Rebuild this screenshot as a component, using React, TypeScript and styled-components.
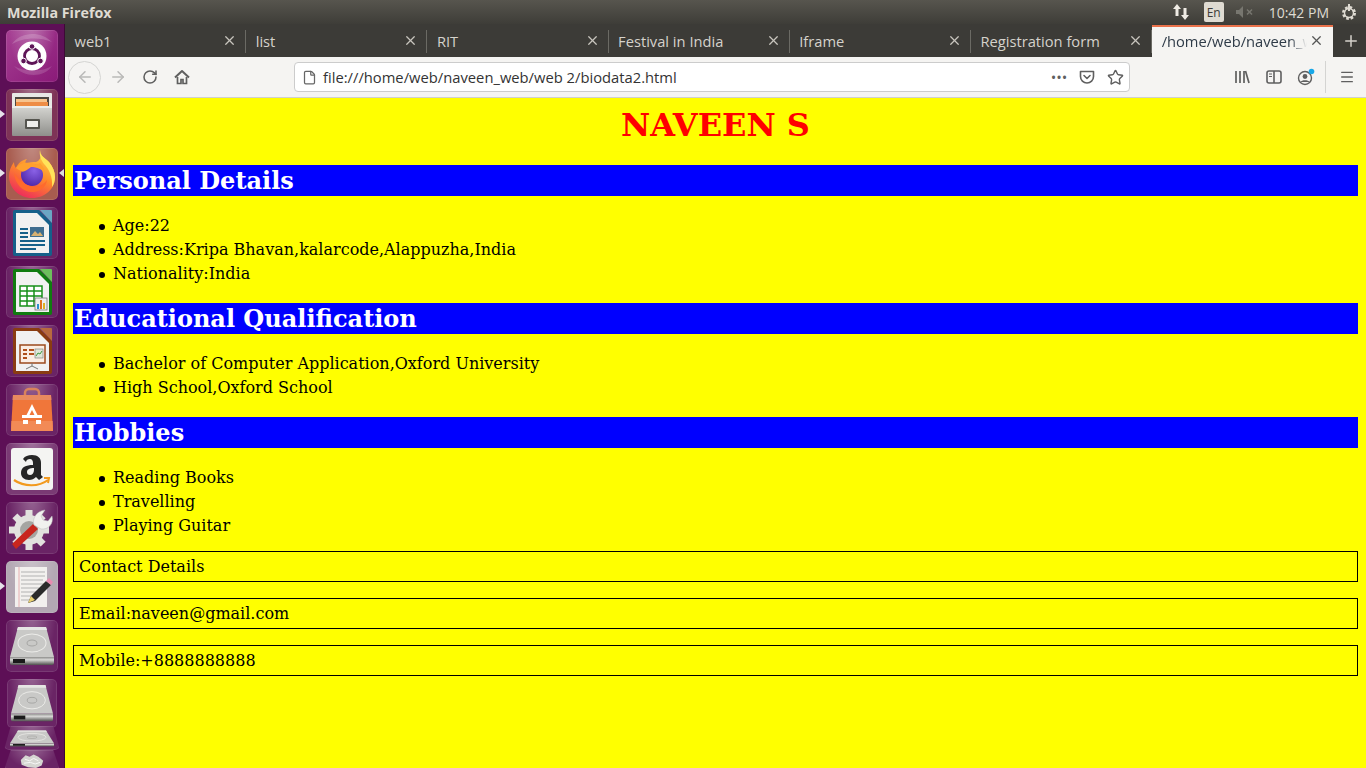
import React from 'react';
import styled, { createGlobalStyle } from 'styled-components';
import { X, Plus, ArrowLeft, ArrowRight, RotateCw, File, Star, Menu } from 'lucide-react';

const Global = createGlobalStyle`
  html, body { margin: 0; padding: 0; height: 100%; overflow: hidden; }
  body { font-family: "Open Sans", "Noto Sans", sans-serif; }
`;

const Screen = styled.div`
  width: 1366px;
  height: 768px;
  display: flex;
  flex-direction: column;
  overflow: hidden;
`;

const TopBar = styled.div`
  height: 24px;
  flex: none;
  display: flex;
  align-items: center;
  justify-content: space-between;
  padding: 0 8px 0 7px;
  background: linear-gradient(#57554e, #3e3d38);
  color: #dfdbd2;
`;

const WindowTitle = styled.span`
  font-weight: 700;
  font-family: "Open Sans", sans-serif;
  font-size: 14.3px;
`;

const Tray = styled.div`
  display: flex;
  align-items: center;
`;

const LangBadge = styled.span`
  width: 20px;
  height: 20px;
  margin: 0 12px 0 14px;
  background: #dfdbd2;
  color: #3c3b37;
  border-radius: 2px;
  font-size: 12px;
  display: flex;
  align-items: center;
  justify-content: center;
`;

const Clock = styled.span`
  margin: 0 11px 0 15px;
  font-size: 14px;
`;

const Body = styled.div`
  flex: 1;
  display: flex;
  min-height: 0;
`;

const Launcher = styled.nav`
  width: 64px;
  flex: none;
  border-right: 1px solid #3d0a36;
  background: #5d0f56;
  display: flex;
  flex-direction: column;
  align-items: center;
  gap: 7px;
  padding-top: 6px;
  overflow: hidden;
`;

const Tile = styled.div<{ $bg?: string; $running?: boolean; $focused?: boolean }>`
  width: 52px;
  height: 52px;
  flex: none;
  border-radius: 5px;
  background: radial-gradient(ellipse at 50% -10%, rgba(255, 255, 255, 0.3), transparent 65%), ${p => p.$bg || '#6a2465'};
  box-shadow: inset 0 0 0 1px rgba(255, 255, 255, 0.1);
  display: flex;
  align-items: center;
  justify-content: center;
  position: relative;
  &::before {
    content: ${p => (p.$running ? '""' : 'none')};
    position: absolute;
    left: -6px;
    top: 21px;
    border: 4px solid transparent;
    border-left: 5px solid #e6e2ea;
    border-right: 0;
  }
  &::after {
    content: ${p => (p.$focused ? '""' : 'none')};
    position: absolute;
    right: -6px;
    top: 21px;
    border: 4px solid transparent;
    border-right: 5px solid #dcdcdc;
    border-left: 0;
  }
`;

const ShrunkTile = styled(Tile)`
  width: 50px;
  height: 49px;
  margin-bottom: -9px;
`;

const FoldedTile = styled(Tile)<{ $h: number }>`
  width: 56px;
  height: ${p => p.$h}px;
  overflow: hidden;
  clip-path: polygon(12% 0, 88% 0, 100% 100%, 0 100%);
  margin-bottom: -7px;
`;

const Window = styled.div`
  flex: 1;
  min-width: 0;
  display: flex;
  flex-direction: column;
`;

const TabStrip = styled.div`
  height: 33px;
  flex: none;
  box-sizing: border-box;
  padding-top: 1px;
  display: flex;
  background: #3c3b37;
`;

const Tab = styled.div<{ $active?: boolean }>`
  width: 181.2px;
  flex: none;
  box-sizing: border-box;
  display: flex;
  align-items: center;
  justify-content: space-between;
  padding: 0 9px 3px 9.5px;
  font-size: 14.7px;
  color: ${p => (p.$active ? '#2f3b48' : '#d5d2cb')};
  background: ${p => (p.$active ? '#f5f4f2' : 'transparent')};
  border-top: 2px solid ${p => (p.$active ? '#e9714a' : 'transparent')};
  position: relative;
  &::after {
    content: ${p => (p.$active ? 'none' : '""')};
    position: absolute;
    right: 0;
    top: 3px;
    bottom: 4px;
    width: 1px;
    background: #6b6a64;
  }
`;

const TabLabel = styled.span`
  white-space: nowrap;
  overflow: hidden;
  width: 145px;
  mask-image: linear-gradient(to right, #000 88%, transparent);
`;

const NewTab = styled.div`
  flex: 1;
  color: #d5d2cb;
  display: flex;
  align-items: center;
  justify-content: center;
  padding-left: 2px;
`;

const Toolbar = styled.div`
  height: 41px;
  flex: none;
  box-sizing: border-box;
  display: flex;
  align-items: center;
  background: #f5f4f2;
  border-bottom: 1px solid #cfcfcf;
  color: #5f5f5f;
`;

const BackButton = styled.div`
  width: 33px;
  height: 33px;
  margin-left: 3px;
  box-sizing: border-box;
  border: 1px solid #d4d4d2;
  border-radius: 50%;
  display: flex;
  align-items: center;
  justify-content: center;
  color: #b9b9b8;
`;

const NavIcon = styled.div<{ $w: number; $color?: string }>`
  width: ${p => p.$w}px;
  flex: none;
  display: flex;
  justify-content: center;
  color: ${p => p.$color || '#5f5f5f'};
`;

const UrlBar = styled.div`
  width: 836px;
  height: 30px;
  margin-left: 96px;
  box-sizing: border-box;
  flex: none;
  display: flex;
  align-items: center;
  padding: 0 2px 0 7px;
  background: #fff;
  border: 1px solid #cccccc;
  border-radius: 4px;
  font-size: 14.75px;
  color: #333;
`;

const UrlText = styled.span`
  flex: 1;
  margin-left: 6px;
`;

const ToolRight = styled.div`
  flex: 1;
  display: flex;
  align-items: center;
  padding-left: 96px;
`;

const Divider = styled.div`
  width: 1px;
  height: 32px;
  background: #d4d4d2;
  margin: 0 11px 0 3px;
`;

const Page = styled.main`
  flex: 1;
  background: #ffff00;
  padding: 8px;
  font-family: "DejaVu Serif", serif;
  color: #000;
  font-size: 16px;
`;

const Name = styled.h1`
  margin: 0 0 22px;
  height: 36px;
  padding-top: 1px;
  line-height: 37px;
  text-align: center;
  color: #ff0000;
  font-size: 32px;
  font-weight: 700;
`;

const SectionHead = styled.h2`
  margin: 0;
  height: 31px;
  line-height: 31px;
  padding-left: 1px;
  background: #0000ff;
  color: #fff;
  font-size: 24px;
  font-weight: 700;
`;

const List = styled.ul`
  margin: 17.6px 0;
  padding: 0 0 0 40px;
  line-height: 24px;
  list-style: none;
`;

const Item = styled.li`
  position: relative;
  &::before {
    content: "";
    position: absolute;
    left: -14px;
    top: 10px;
    width: 6px;
    height: 6px;
    border-radius: 50%;
    background: #000;
  }
`;

const ContactBox = styled.div`
  height: 31px;
  box-sizing: border-box;
  line-height: 29px;
  border: 1px solid #000;
  padding: 0 5px;
  margin-bottom: 16px;
`;

const Contacts = styled.div`
  margin-top: -4.6px;
`;

// launcher artwork
const UbuntuIcon = () => (
  <svg width="52" height="52" viewBox="0 0 52 52">
    <path d="M6 14C14 2 34 0 46 12 32 6 16 8 6 14z" fill="#fff" opacity="0.18" />
    <path d="M8 36c10 12 30 12 38 0-10 6-28 6-38 0z" fill="#fff" opacity="0.15" />
    <circle cx="26" cy="26" r="14.5" fill="#fff" />
    <circle cx="26" cy="26" r="7.5" fill="none" stroke="#5e1557" strokeWidth="2.8" />
    <circle cx="26" cy="16.5" r="2.8" fill="#5e1557" stroke="#fff" strokeWidth="1" />
    <circle cx="17.5" cy="31" r="2.8" fill="#5e1557" stroke="#fff" strokeWidth="1" />
    <circle cx="34.5" cy="31" r="2.8" fill="#5e1557" stroke="#fff" strokeWidth="1" />
  </svg>
);

const FilesIcon = () => (
  <svg width="42" height="44" viewBox="0 0 42 44">
    <defs>
      <linearGradient id="cab" x1="0" y1="0" x2="0" y2="1">
        <stop offset="0" stopColor="#d6d6d2" />
        <stop offset="1" stopColor="#8f8f8b" />
      </linearGradient>
    </defs>
    <rect x="1" y="0" width="40" height="14" rx="1" fill="#e8e8e5" />
    <rect x="4" y="4" width="34" height="12" fill="#4c4640" />
    <rect x="5" y="6" width="31" height="3" fill="#f7c38d" />
    <rect x="5" y="9" width="32" height="5" fill="#ee8d45" />
    <rect x="1" y="13" width="40" height="30" rx="1" fill="url(#cab)" />
    <rect x="1" y="13" width="40" height="2" fill="#ecece9" />
    <rect x="14" y="26" width="15" height="10" rx="1" fill="#55554f" />
    <rect x="16" y="28" width="11" height="6" fill="#f0f0ed" />
  </svg>
);

const FirefoxIcon = () => (
  <svg width="46" height="50" viewBox="0 0 46 50">
    <defs>
      <linearGradient id="ffo" x1="0.8" y1="0" x2="0.3" y2="1">
        <stop offset="0" stopColor="#ffd84a" />
        <stop offset="0.5" stopColor="#ff8a2a" />
        <stop offset="1" stopColor="#ee2a5c" />
      </linearGradient>
      <radialGradient id="ffg" cx="0.6" cy="0.3" r="0.8">
        <stop offset="0" stopColor="#8a62e6" />
        <stop offset="1" stopColor="#4a22a4" />
      </radialGradient>
    </defs>
    <path d="M31 1C31 7 36 9 40 13C44 18 46 23 46 28C46 40 36 49 23 49C10 49 0 39 0 27C0 22 2 17 5 13C5 16 6 18 7 19C9 14 13 11 18 10C16 12 16 14 17 15C20 13 24 13 27 13C30 12 32 9 32 6C32 4 31 2 31 1Z" fill="url(#ffo)" />
    <path d="M31 1C31 7 36 9 40 13C44 18 46 23 46 28C46 32 45 35 43 38C44 28 40 20 35 15C32 11 30 6 31 1Z" fill="#ffe45a" />
    <circle cx="23" cy="26" r="11" fill="url(#ffg)" />
    <path d="M7 19C10 14 16 13 21 14C25 15 28 16 31 14C34 17 36 21 36 25C33 20 28 18 22 18C18 21 14 24 12 22C10 21 8 20 7 19Z" fill="#ffa02e" />
    <path d="M5 24C6 35 14 44 25 43C32 42 37 38 38 31C34 37 27 39 21 37C14 35 10 30 5 24Z" fill="#ff6a2c" />
  </svg>
);

const LibreDoc = ({ edge, corner, children }: { edge: string; corner: string; children: React.ReactNode }) => (
  <svg width="42" height="48" viewBox="0 0 42 48">
    <path d="M2 3a2 2 0 0 1 2-2h24l13 13v31a2 2 0 0 1-2 2H4a2 2 0 0 1-2-2z" fill={edge} />
    <path d="M29 1l12 13V2a1 1 0 0 0-1-1z" fill={corner} />
    <path d="M5 4h21l12 12v28H5z" fill="#f1f1f1" />
    {children}
  </svg>
);

const WriterIcon = () => (
  <LibreDoc edge="#15608a" corner="#6aa6c4">
    <rect x="9" y="19" width="8" height="2" fill="#15608a" />
    <rect x="9" y="23" width="8" height="2" fill="#15608a" />
    <rect x="9" y="27" width="8" height="2" fill="#15608a" />
    <rect x="19" y="18" width="14" height="10" fill="#3f6d8f" />
    <path d="M20 27l4-5 3 3 2-2 3 4z" fill="#d8b070" />
    <rect x="9" y="31" width="25" height="2" fill="#15608a" />
    <rect x="9" y="35" width="25" height="2" fill="#15608a" />
    <rect x="9" y="39" width="16" height="2" fill="#15608a" />
  </LibreDoc>
);

const CalcIcon = () => (
  <LibreDoc edge="#107c10" corner="#6cbf5c">
    <rect x="9" y="18" width="22" height="20" fill="#fff" stroke="#17901a" strokeWidth="1.5" />
    <path d="M9 23h22M9 28h22M9 33h22M16 18v20M23 18v20" stroke="#17901a" strokeWidth="1.5" />
    <rect x="24" y="30" width="12" height="12" fill="#eee" stroke="#777" strokeWidth="0.8" />
    <rect x="26" y="36" width="2" height="5" fill="#2d8fd0" />
    <rect x="29" y="32" width="2" height="9" fill="#e07020" />
    <rect x="32" y="35" width="2" height="6" fill="#e0b020" />
  </LibreDoc>
);

const ImpressIcon = () => (
  <LibreDoc edge="#8a3c12" corner="#b86a3e">
    <rect x="9" y="18" width="25" height="18" fill="#fbeee4" stroke="#9c4a1c" strokeWidth="1.5" />
    <rect x="12" y="22" width="4" height="2" fill="#b0501c" />
    <rect x="12" y="26" width="4" height="2" fill="#b0501c" />
    <rect x="12" y="30" width="4" height="2" fill="#b0501c" />
    <rect x="18" y="22" width="5" height="2" fill="#b0501c" />
    <rect x="18" y="26" width="5" height="2" fill="#b0501c" />
    <rect x="24" y="22" width="8" height="9" fill="#dfe6d8" stroke="#777" strokeWidth="0.6" />
    <path d="M25 29l2-3 2 1 2-3" stroke="#3f9a3f" fill="none" />
    <path d="M21 36v3M21 39l-6 3M21 39l6 3" stroke="#777" />
  </LibreDoc>
);

const StoreIcon = () => (
  <svg width="44" height="46" viewBox="0 0 44 46">
    <path d="M15 12V6a4 4 0 0 1 4-4h6a4 4 0 0 1 4 4v6" fill="none" stroke="#d9835c" strokeWidth="2.5" />
    <path d="M3 8h38l2 36H1z" fill="#f0763a" />
    <path d="M3 8h38l0.4 5H2.6z" fill="#e88a5f" />
    <path d="M1.4 34h41.2l0.4 10H1z" fill="#f28a56" />
    <path d="M22 17l-6 12h3l3-6 3 6h3z" fill="#fff" />
    <rect x="12" y="28" width="20" height="3" fill="#fff" />
    <rect x="13" y="33" width="5" height="4" fill="#fff" />
    <rect x="26" y="33" width="5" height="4" fill="#fff" />
  </svg>
);

const AmazonIcon = () => (
  <svg width="42" height="42" viewBox="0 0 42 42">
    <rect width="42" height="42" rx="3" fill="#f4f4f2" />
    <path d="M12 11c2-3 5-4 9-4 6 0 9 3 9 8v12l2 2-4 3-3-3c-2 2-4 3-7 3-5 0-8-3-8-7 0-6 5-8 12-8v-2c0-2-1-4-3-4-2 0-4 1-4 3z" fill="#262626" />
    <path d="M16 24c0 2 1 3 3 3s4-2 4-5v-2c-4 0-7 1-7 4z" fill="#f4f4f2" />
    <path d="M3 32c10 7 25 7 34 0" fill="none" stroke="#f29a1f" strokeWidth="2.2" />
    <path d="M33 30l5 0-1 5" fill="none" stroke="#f29a1f" strokeWidth="2" />
  </svg>
);

const SettingsIcon = () => (
  <svg width="46" height="46" viewBox="0 0 46 46">
    <g transform="translate(20 25)" fill="#e2e2de">
      <circle r="15" />
      {[0, 45, 90, 135, 180, 225, 270, 315].map(a => (
        <rect key={a} x="-3.5" y="-20" width="7" height="8" transform={`rotate(${a})`} />
      ))}
    </g>
    <circle cx="20" cy="25" r="9" fill="#a5a5a1" />
    <path d="M3 39l4 5 22-20-5-5z" fill="#c8261e" />
    <path d="M25 20c-2-6 2-14 11-15l-4 6 2 4 5 1 4-5c2 8-4 14-11 13z" fill="#f1f1ee" stroke="#bbb" strokeWidth="0.5" />
  </svg>
);

const EditorIcon = () => (
  <svg width="44" height="44" viewBox="0 0 44 44">
    <rect x="5" y="2" width="32" height="40" fill="#f2f0ee" />
    <path d="M9 2v40" stroke="#e8b0b0" />
    <path d="M11 7h24M11 11h24M11 15h22M11 19h24M11 23h18M11 27h16M11 31h12M11 35h10" stroke="#9a9a9a" strokeWidth="0.7" />
    <path d="M18 38l3-7 15-15 5 4-16 16z" fill="#2b2b2b" />
    <path d="M36 16l3-3 4 4-2 3z" fill="#e88ab0" />
    <path d="M18 38l3-7 4 4z" fill="#e8d070" />
  </svg>
);

const DriveIcon = ({ w = 46, h }: { w?: number; h?: number }) => (
  <svg width={w} height={h ?? w * 0.87} viewBox="0 0 46 40" preserveAspectRatio="none">
    <defs>
      <linearGradient id="drv" x1="0" y1="0" x2="0" y2="1">
        <stop offset="0" stopColor="#8e8e8c" />
        <stop offset="0.35" stopColor="#d8d8d6" />
        <stop offset="1" stopColor="#4e4e4c" />
      </linearGradient>
    </defs>
    <path d="M9 1h28l8 30H1z" fill="#c9c9c7" />
    <path d="M9 1h28l1 3H8z" fill="#e6e6e4" />
    <ellipse cx="23" cy="17" rx="14" ry="9" fill="none" stroke="#ecece9" />
    <ellipse cx="23" cy="17" rx="5" ry="3" fill="none" stroke="#a6a6a4" />
    <path d="M1 31h44v6a2 2 0 0 1-2 2H3a2 2 0 0 1-2-2z" fill="url(#drv)" />
    <rect x="4" y="33" width="12" height="4" fill="#1a1a1a" />
  </svg>
);

const TrashPile = () => (
  <svg width="34" height="16" viewBox="0 0 34 20">
    <path d="M3 10l6-6 5 2 5-3 6 3 6 5-2 6-7 3-10-1-8-3z" fill="#d6d6d2" />
    <path d="M8 9l6 2 5-3 6 3M7 14l8-1 6 2 6-2" stroke="#fff" fill="none" />
  </svg>
);

const HomeIcon = () => (
  <svg width="16" height="16" viewBox="0 0 16 16" fill="none" stroke="#5f5f5f">
    <path d="M1 8.5L8 2l7 6.5" strokeWidth="2" strokeLinejoin="round" />
    <path d="M3.500 8v6.500H7v-4h2v4h3.500V8" strokeWidth="1.700" />
  </svg>
);

const PocketIcon = () => (
  <svg width="16" height="16" viewBox="0 0 16 16" fill="none" stroke="#5f5f5f" strokeWidth="1.6">
    <path d="M1.5 2.5h13v5a6.5 6.5 0 0 1-13 0z" strokeLinejoin="round" />
    <path d="M5 6.5l3 3 3-3" strokeLinecap="round" strokeLinejoin="round" />
  </svg>
);

const SidebarIcon = () => (
  <svg width="16" height="14" viewBox="0 0 16 14" fill="none" stroke="#5f5f5f" strokeWidth="1.6">
    <rect x="1" y="1" width="14" height="12" rx="2" />
    <path d="M8 1v12" />
    <path d="M3 4h3M3 6.5h3" strokeWidth="1" />
  </svg>
);

const AccountIcon = () => (
  <svg width="18" height="18" viewBox="0 0 18 18" fill="none">
    <circle cx="8" cy="10" r="6.5" stroke="#5f5f5f" strokeWidth="1.4" />
    <circle cx="8" cy="8.5" r="2.4" fill="#5f5f5f" />
    <path d="M3.5 14c1-2.5 8-2.5 9 0" fill="#5f5f5f" />
    <circle cx="14.5" cy="3.5" r="2.8" fill="#19a8e8" />
  </svg>
);

const LibraryIcon = () => (
  <svg width="16" height="14" viewBox="0 0 16 14" stroke="#5f5f5f" strokeWidth="1.7" fill="none">
    <path d="M2 1v12M6 1v12M10 1v12M11.5 1l3.5 12" />
  </svg>
);

const NetworkIcon = () => (
  <svg width="18" height="18" viewBox="0 0 18 18" fill="#efebe4">
    <path d="M5 1l4 5H6.5v7h-3V6H1z" />
    <path d="M13 17l4-5h-2.5V5h-3v7H9z" />
  </svg>
);

const SoundIcon = () => (
  <svg width="18" height="12" viewBox="0 0 18 12" fill="#77766f">
    <path d="M0 4h3l4-4v12l-4-4H0z" />
    <path d="M11 3.5l5 5M16 3.5l-5 5" stroke="#77766f" strokeWidth="1.5" />
  </svg>
);

const PowerIcon = () => (
  <svg width="18" height="18" viewBox="0 0 18 18" fill="none" stroke="#dfdbd2">
    <circle cx="9" cy="10" r="5.5" strokeWidth="3" strokeDasharray="2.5 1.8" />
    <circle cx="9" cy="10" r="4.5" strokeWidth="1.4" />
    <path d="M9 1v7" strokeWidth="2" />
  </svg>
);

const tabs = ['web1', 'list', 'RIT', 'Festival in India', 'Iframe', 'Registration form'];

const sections = [
  { title: 'Personal Details', items: ['Age:22', 'Address:Kripa Bhavan,kalarcode,Alappuzha,India', 'Nationality:India'] },
  { title: 'Educational Qualification', items: ['Bachelor of Computer Application,Oxford University', 'High School,Oxford School'] },
  { title: 'Hobbies', items: ['Reading Books', 'Travelling', 'Playing Guitar'] },
];

const contacts = ['Contact Details', 'Email:naveen@gmail.com', 'Mobile:+8888888888'];

export default function App() {
  return (
    <Screen>
      <Global />
      <TopBar>
        <WindowTitle>Mozilla Firefox</WindowTitle>
        <Tray>
          <NetworkIcon />
          <LangBadge>En</LangBadge>
          <SoundIcon />
          <Clock>10:42 PM</Clock>
          <PowerIcon />
        </Tray>
      </TopBar>
      <Body>
        <Launcher>
          <Tile $bg="linear-gradient(135deg,#a63f93,#8a1a78)"><UbuntuIcon /></Tile>
          <Tile $bg="#7e3357" $running><FilesIcon /></Tile>
          <Tile $bg="#a85c4f" $running $focused><FirefoxIcon /></Tile>
          <Tile><WriterIcon /></Tile>
          <Tile><CalcIcon /></Tile>
          <Tile><ImpressIcon /></Tile>
          <Tile><StoreIcon /></Tile>
          <Tile $bg="#7a3a74"><AmazonIcon /></Tile>
          <Tile><SettingsIcon /></Tile>
          <Tile $bg="#b3a8b3" $running><EditorIcon /></Tile>
          <Tile><DriveIcon /></Tile>
          <ShrunkTile><DriveIcon w={44} /></ShrunkTile>
          <FoldedTile $h={24}><DriveIcon w={46} h={17} /></FoldedTile>
          <FoldedTile $h={20}><TrashPile /></FoldedTile>
        </Launcher>
        <Window>
          <TabStrip>
            {tabs.map(t => (
              <Tab key={t}>
                <span>{t}</span>
                <X size={15} color="#c8c5be" />
              </Tab>
            ))}
            <Tab $active>
              <TabLabel>/home/web/naveen_web/web 2/biodata2.html</TabLabel>
              <X size={15} color="#555" />
            </Tab>
            <NewTab><Plus size={18} /></NewTab>
          </TabStrip>
          <Toolbar>
            <BackButton><ArrowLeft size={18} /></BackButton>
            <NavIcon $w={34} $color="#b9b9b8"><ArrowRight size={18} /></NavIcon>
            <NavIcon $w={30}><RotateCw size={16} strokeWidth={2.3} /></NavIcon>
            <NavIcon $w={33}><HomeIcon /></NavIcon>
            <UrlBar>
              <File size={15} color="#666" />
              <UrlText>file:///home/web/naveen_web/web 2/biodata2.html</UrlText>
              <NavIcon $w={24}>•••</NavIcon>
              <NavIcon $w={32}><PocketIcon /></NavIcon>
              <NavIcon $w={24}><Star size={17} /></NavIcon>
            </UrlBar>
            <ToolRight>
              <NavIcon $w={32}><LibraryIcon /></NavIcon>
              <NavIcon $w={32}><SidebarIcon /></NavIcon>
              <NavIcon $w={32}><AccountIcon /></NavIcon>
              <Divider />
              <NavIcon $w={20}><Menu size={16} /></NavIcon>
            </ToolRight>
          </Toolbar>
          <Page>
            <Name>NAVEEN S</Name>
            {sections.map(s => (
              <section key={s.title}>
                <SectionHead>{s.title}</SectionHead>
                <List>
                  {s.items.map(i => <Item key={i}>{i}</Item>)}
                </List>
              </section>
            ))}
            <Contacts>
              {contacts.map(c => <ContactBox key={c}>{c}</ContactBox>)}
            </Contacts>
          </Page>
        </Window>
      </Body>
    </Screen>
  );
}
